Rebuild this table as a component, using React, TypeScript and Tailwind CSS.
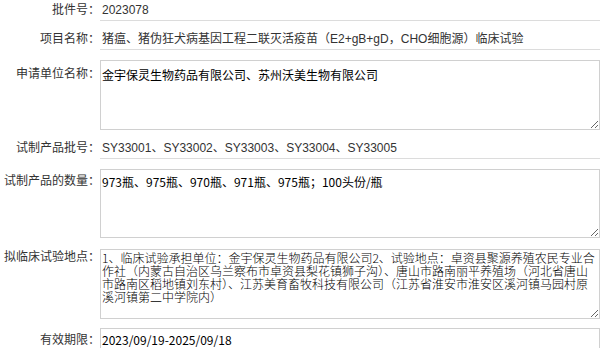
import React from "react";

const font = { fontFamily: '"Liberation Sans", "Noto Sans CJK SC", sans-serif' };

const Label: React.FC<{ text: string; className?: string }> = ({ text, className }) => (
    <div className={`w-[100px] shrink-0 text-right text-[12px] text-[#333] ${className ?? ""}`}>
        {text}：
    </div>
);

const LineValue: React.FC<{ value: string }> = ({ value }) => (
    <div className="w-[500px] h-[21px] border-b border-[#dcdcdc] pl-[2px] text-[12px] leading-[20px] text-[#333] whitespace-nowrap">
        {value}
    </div>
);

const Area: React.FC<{ value: string; className: string }> = ({ value, className }) => (
    <textarea
        readOnly
        wrap="off"
        value={value}
        className={`block w-[500px] border border-[#d0d0d0] pl-[1px] text-[12px] text-black overflow-hidden outline-none [font-family:'Noto_Sans_CJK_SC',sans-serif] ${className}`}
    />
);

const places = [
    "1、临床试验承担单位：金宇保灵生物药品有限公司2、试验地点：卓资县聚源养殖农民专业合",
    "作社（内蒙古自治区乌兰察布市卓资县梨花镇狮子沟）、唐山市路南丽平养殖场（河北省唐山",
    "市路南区稻地镇刘东村）、江苏美育畜牧科技有限公司（江苏省淮安市淮安区溪河镇马园村原",
    "溪河镇第二中学院内）",
].join("\n");

export default function App() {
    return (
        <div className="w-[606px] h-[348px] overflow-hidden bg-white" style={font}>
            <div className="flex">
                <Label text="批件号" className="leading-[20px]" />
                <LineValue value="2023078" />
            </div>
            <div className="flex mt-[8px]">
                <Label text="项目名称" className="leading-[20px]" />
                <LineValue value="猪瘟、猪伪狂犬病基因工程二联灭活疫苗（E2+gB+gD，CHO细胞源）临床试验" />
            </div>
            <div className="flex mt-[10px]">
                <Label text="申请单位名称" className="pt-[4px] leading-[20px]" />
                <Area
                    value="金宇保灵生物药品有限公司、苏州沃美生物有限公司"
                    className="h-[70px] pt-[6px] leading-[16px]"
                />
            </div>
            <div className="flex mt-[8px]">
                <Label text="试制产品批号" className="leading-[20px]" />
                <LineValue value="SY33001、SY33002、SY33003、SY33004、SY33005" />
            </div>
            <div className="flex mt-[10px]">
                <Label text="试制产品的数量" className="pt-[2px] leading-[20px]" />
                <Area
                    value="973瓶、975瓶、970瓶、971瓶、975瓶；100头份/瓶"
                    className="h-[69px] pt-[4px] leading-[16px]"
                />
            </div>
            <div className="flex mt-[11px]">
                <Label text="拟临床试验地点" className="pt-[1px] leading-[14px]" />
                <Area value={places} className="h-[70px] pt-[1px] leading-[13px] font-light" />
            </div>
            <div className="flex mt-[9px]">
                <Label text="有效期限" className="pt-[2px] leading-[20px]" />
                <div className="w-[500px] h-[24px] border border-[#d0d0d0] pl-[1px] pt-[2px] text-[12px] leading-[18px] text-black [font-family:'Noto_Sans_CJK_SC',sans-serif]">
                    2023/09/19-2025/09/18
                </div>
            </div>
        </div>
    );
}
